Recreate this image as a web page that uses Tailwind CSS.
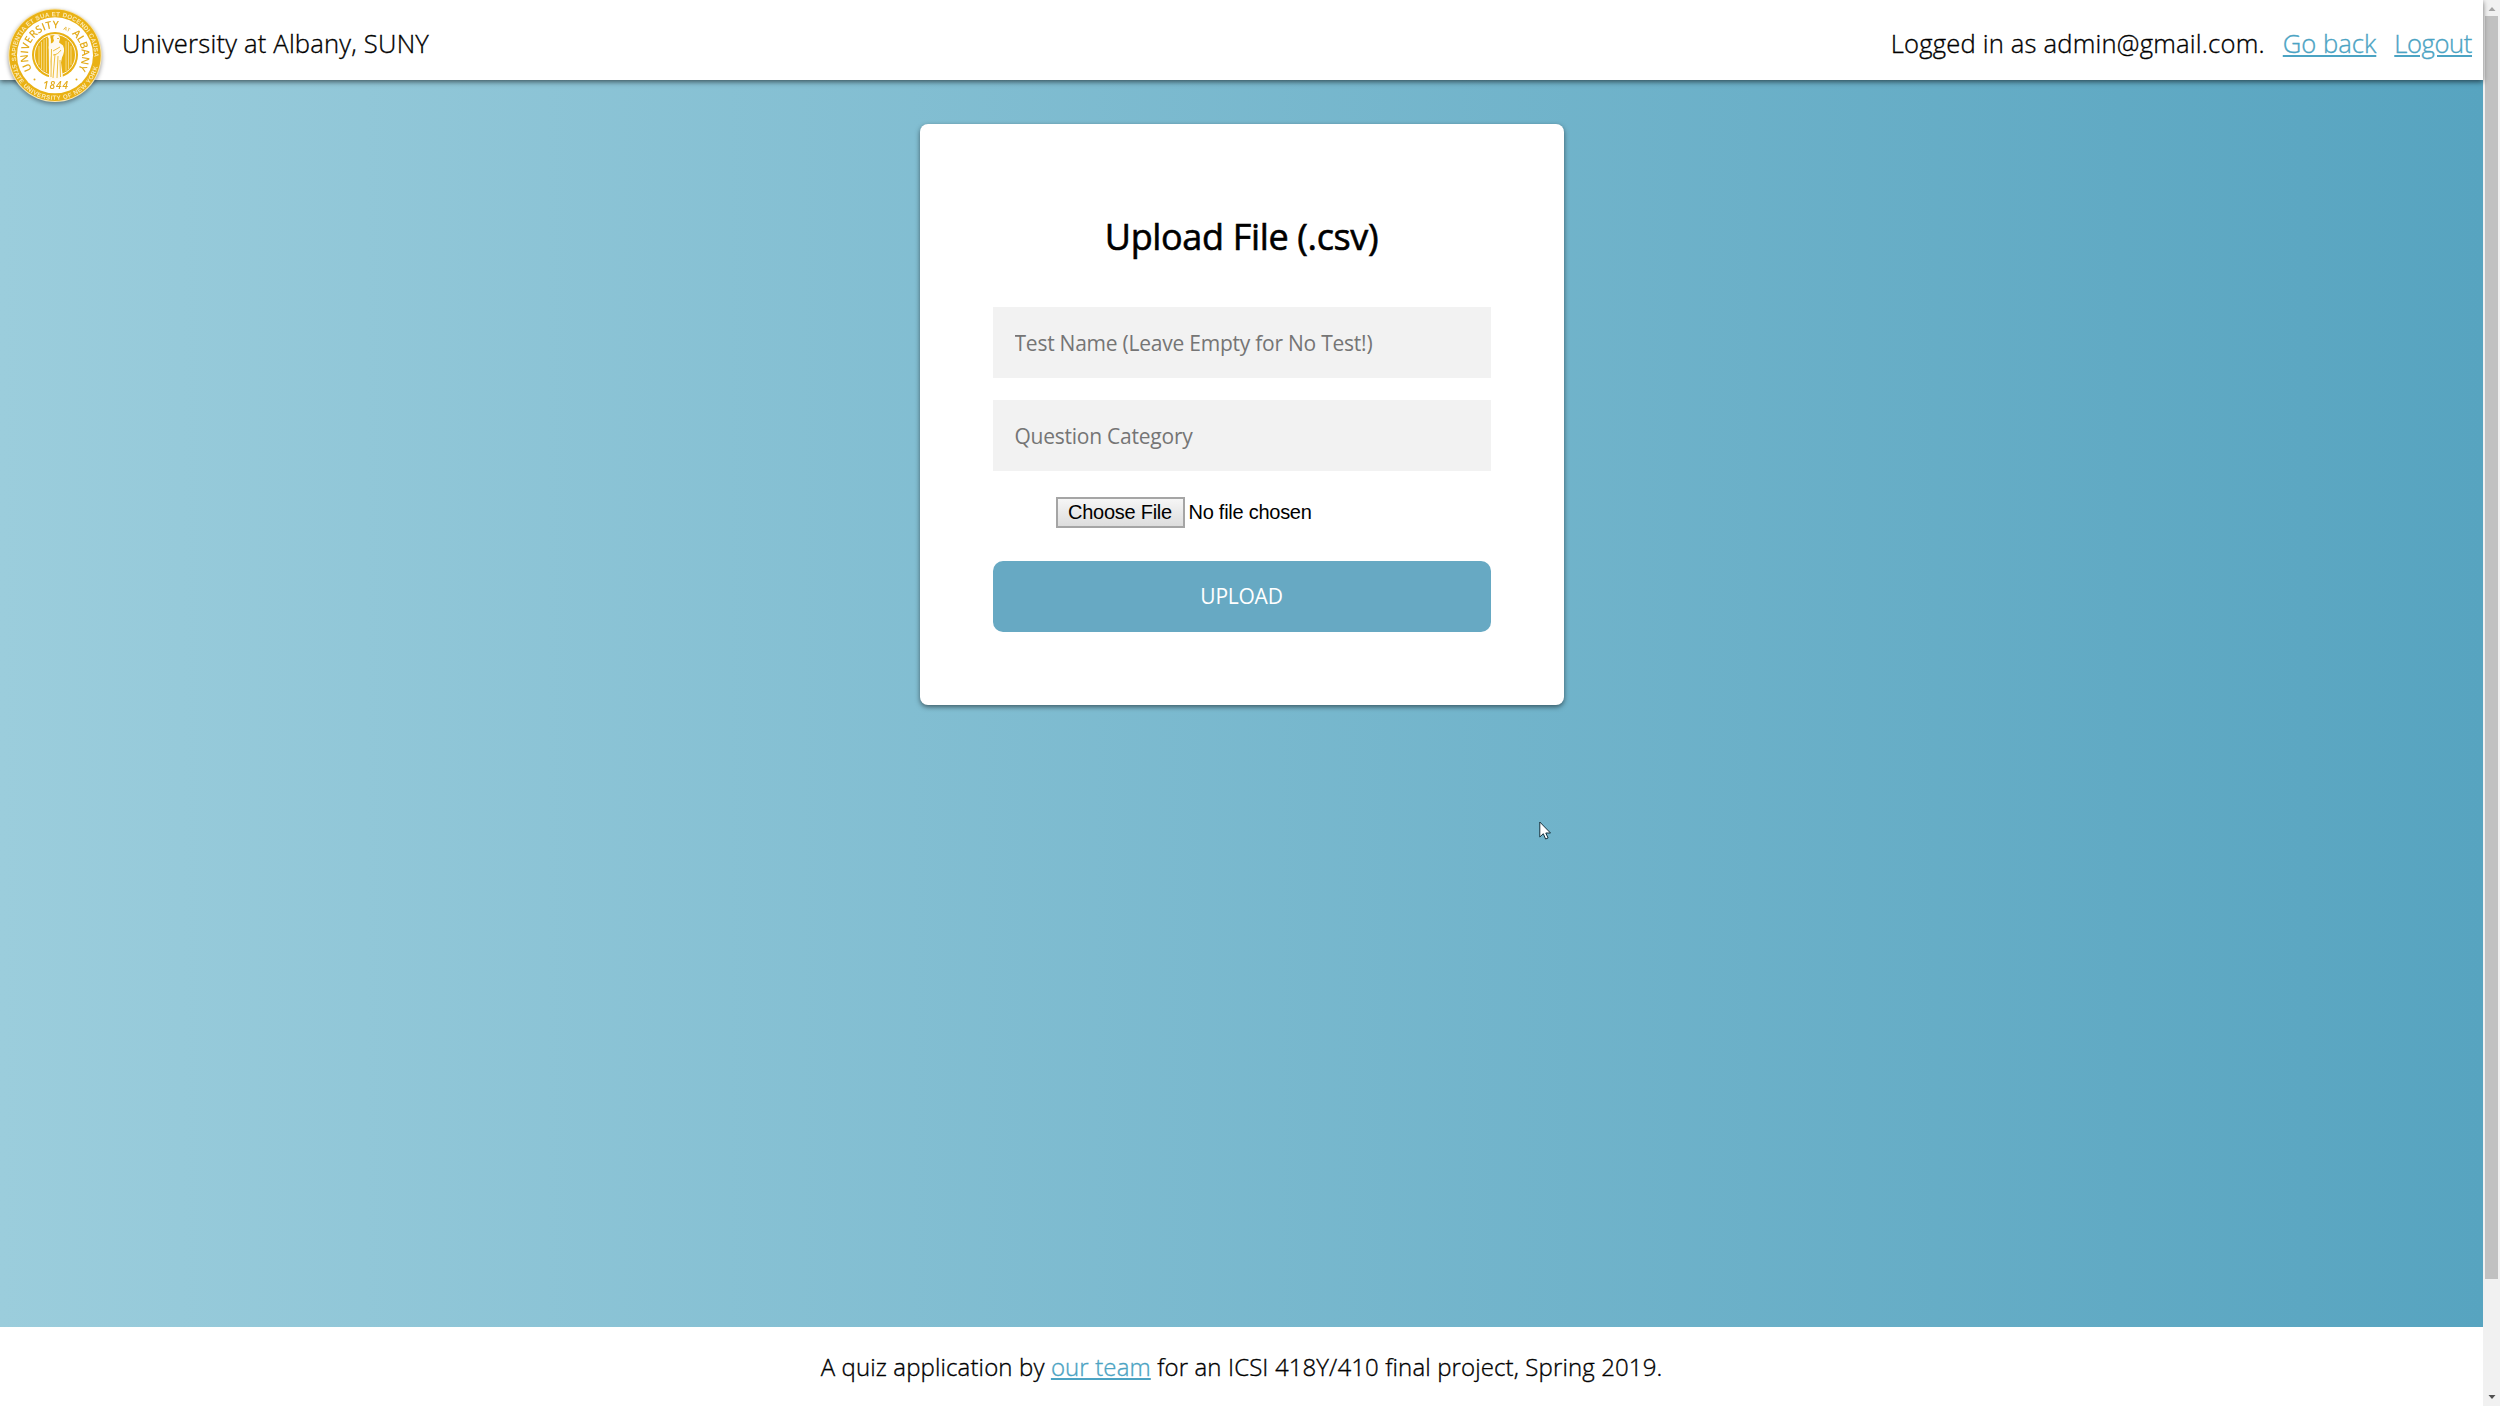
<!DOCTYPE html>
<html lang="en">
<head>
<meta charset="utf-8">
<title>Upload File</title>
<script src="https://cdn.jsdelivr.net/npm/@tailwindcss/browser@4"></script>
</head>
<body class="flex h-[1406px] w-[2500px] overflow-hidden bg-white font-['Open_Sans',sans-serif] text-black">
  <div class="flex w-[2483px] flex-col">
    <header class="relative z-10 flex h-20 items-center justify-between bg-white pt-[8px] pr-[11px] pl-[122px] text-[25.6px] leading-[34px] font-light tracking-[0.2px] shadow-[0_2px_5px_rgba(0,0,0,0.55)] [-webkit-text-stroke:0.35px_currentColor]">
      <svg class="absolute top-1 left-1 size-[104px] tracking-normal drop-shadow-[0_2px_2px_rgba(0,0,0,0.4)] [-webkit-text-stroke:0]" viewBox="0 0 104 104">
        <defs>
          <path id="outer-top" d="M12.200 57A39.200 39.200 0 1 1 89.800 57"/>
          <path id="outer-bottom" d="M7.100 56A44.100 44.100 0 0 0 94.900 56"/>
          <path id="inner" d="M28.100 65.600A27 27 0 1 1 73.900 65.600"/>
        </defs>
        <circle cx="51" cy="51.300" r="46.700" fill="#f8e6b0"/>
        <circle cx="51" cy="51.300" r="45.700" fill="#e9b114"/>
        <circle cx="51" cy="51.300" r="38" fill="#fff"/>
        <g fill="#fbe9b4" font-family="Liberation Sans" font-weight="700" font-size="6.200">
          <text><textPath href="#outer-top" textLength="130">SAPIENTIA ET SUA ET DOCENDI CAUSA</textPath></text>
          <text><textPath href="#outer-bottom" startOffset="5" textLength="118">STATE UNIVERSITY OF NEW YORK</textPath></text>
        </g>
        <g fill="#e3ab1c" font-family="Open Sans" font-weight="600">
          <text font-size="10.500"><textPath href="#inner" textLength="61">UNIVERSITY</textPath></text>
          <text font-size="5"><textPath href="#inner" startOffset="65.500">AT</textPath></text>
          <text font-size="10.500"><textPath href="#inner" startOffset="75" textLength="39">ALBANY</textPath></text>
          <text x="39" y="85" font-size="10" font-style="italic" textLength="25">1844</text>
        </g>
        <circle cx="30.500" cy="75.500" r="1" fill="#e3ab1c"/>
        <circle cx="72.500" cy="75.500" r="1" fill="#e3ab1c"/>
        <circle cx="51" cy="51" r="23" fill="#e9b114"/>
        <circle cx="51" cy="51" r="20.500" fill="none" stroke="#fff" stroke-width=".9"/>
        <path d="M35 42v19M37.500 38v27M40 35.500v32M42.500 34v34M62 37v30M64.500 38v27M67 42v19" stroke="#f6dc8e" stroke-width=".9" fill="none"/>
        <path d="M50 31.500c3-2 6 0 6 3l-1 4 4 3c2 4 1 8-1 12l-1 5 2 15c-4 3-10 3-14 0l2-16-2-12c-1-4 1-6 4-7l1-2c-1-2-1-4 0-5Z" fill="#fffaf0"/>
        <path d="m46 47 0-12-2-3M45.500 32 46 76" stroke="#fffaf0" stroke-width="1.800" fill="none"/>
        <path d="M47.500 45 47 73M51 50l-2 24M54 52l-1 22M56 56l.5 17M49 47l7-4M49 51c3 0 6-2 8-5M53 34.500h2" stroke="#e9b114" stroke-width=".8" fill="none"/>
      </svg>
      <div>University at Albany, SUNY</div>
      <div class="flex gap-[18px]">
        <span>Logged in as admin@gmail.com.</span>
        <a class="tracking-[0px] text-[#4ba3c3] underline" href="#">Go back</a>
        <a class="tracking-[-0.4px] text-[#4ba3c3] underline" href="#">Logout</a>
      </div>
    </header>
    <main class="flex flex-1 items-start justify-center bg-[linear-gradient(to_right,#9bcddc,#57a4c0)] pt-11">
      <form class="flex h-[581px] w-[644px] flex-col rounded-lg bg-white px-[73px] pt-[88px] shadow-[0_2px_5px_rgba(0,0,0,0.5)]">
        <h1 class="mb-[46px] text-center text-[36px] leading-[49px] font-normal tracking-[-0.35px] [-webkit-text-stroke:0.6px_black]">Upload File (.csv)</h1>
        <input class="mb-[22px] h-[71px] bg-[#f2f2f2] px-[22px] text-[21px] tracking-[-0.24px] placeholder:text-[#757575]" placeholder="Test Name (Leave Empty for No Test!)">
        <input class="h-[71px] bg-[#f2f2f2] px-[22px] text-[21px] tracking-[-0.24px] placeholder:text-[#757575]" placeholder="Question Category">
        <div class="mt-[26px] mb-[33px] ml-[63px] flex items-center gap-1 font-['Liberation_Sans',sans-serif] text-[20px] tracking-[-0.26px]">
          <button type="button" class="h-[31px] w-[129px] border-2 border-[#a5a5a5] bg-linear-to-b from-[#f6f6f6] to-[#dddddd] leading-[25px]">Choose File</button>
          <span class="leading-[25px]">No file chosen</span>
        </div>
        <button type="button" class="h-[71px] rounded-[10px] bg-[#67a9c3] text-[21px] tracking-[-0.25px] text-white">UPLOAD</button>
      </form>
    </main>
    <footer class="flex h-[79px] justify-center bg-white pt-[23px] text-[24px] leading-[34px] font-light tracking-[0.12px] [-webkit-text-stroke:0.35px_currentColor]">
      <p>A quiz application by <a class="text-[#4ba3c3] underline" href="#">our team</a> for an ICSI 418Y/410 final project, Spring 2019.</p>
    </footer>
  </div>
  <div class="flex w-[17px] flex-col items-center bg-[#f1f1f1]">
    <svg class="h-4 w-4" viewBox="0 0 16 16"><path d="M4.500 11 8 7l3.500 4Z" fill="#a3a3a3"/></svg>
    <div class="h-[1263px] w-[13px] bg-[#c1c1c1]"></div>
    <svg class="mt-auto h-4 w-4" viewBox="0 0 16 16"><path d="M4.500 5h7L8 9Z" fill="#505050"/></svg>
  </div>
  <svg class="absolute top-[821px] left-[1539px] z-20 h-[20px] w-[13px]" viewBox="0 0 13 20"><path d="M.8 1v15l3.500-3.300 2.300 5.300 2.500-1-2.300-5h4.700Z" fill="#fff" stroke="#15313d" stroke-width="1"/></svg>
</body>
</html>
